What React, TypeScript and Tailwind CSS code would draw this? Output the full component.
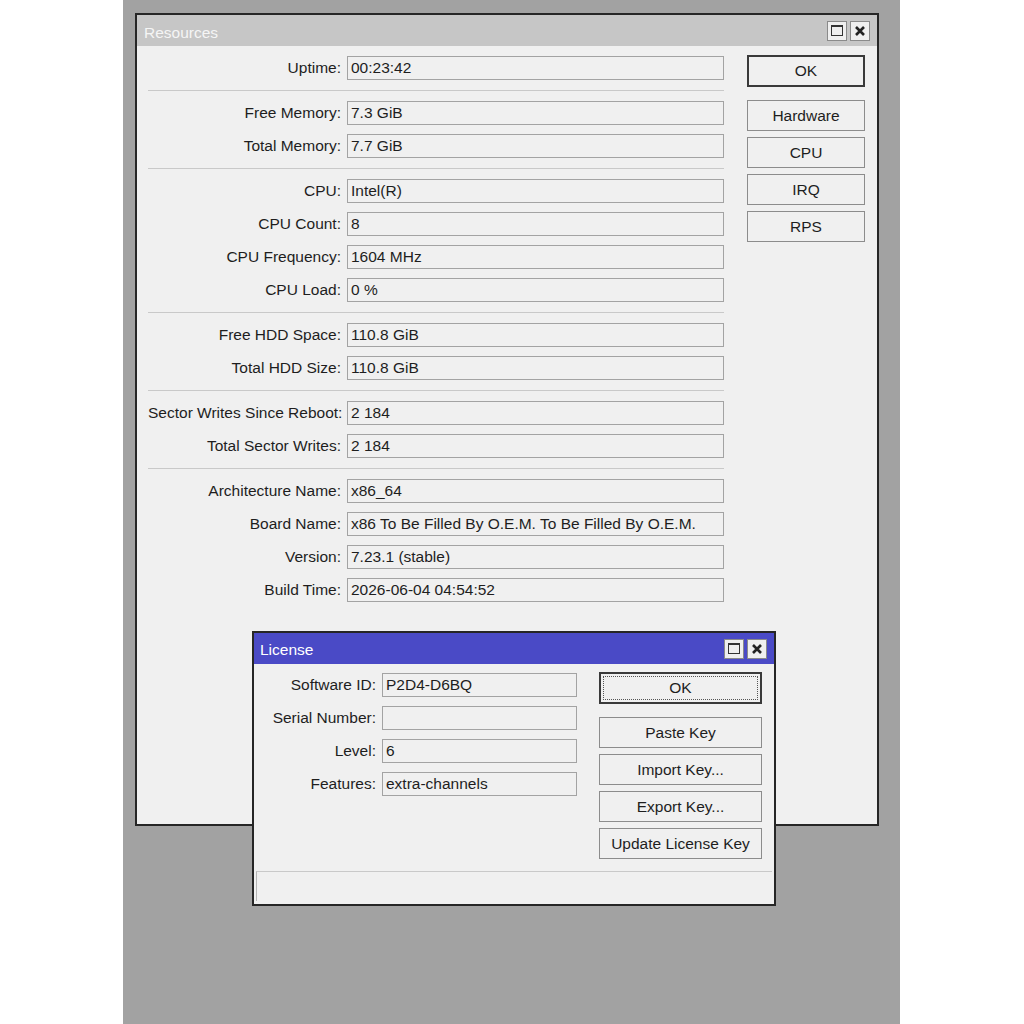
import React from 'react'

const GROUPS: [string, string][][] = [
  [['Uptime', '00:23:42']],
  [['Free Memory', '7.3 GiB'], ['Total Memory', '7.7 GiB']],
  [['CPU', 'Intel(R)'], ['CPU Count', '8'], ['CPU Frequency', '1604 MHz'], ['CPU Load', '0 %']],
  [['Free HDD Space', '110.8 GiB'], ['Total HDD Size', '110.8 GiB']],
  [['Sector Writes Since Reboot', '2 184'], ['Total Sector Writes', '2 184']],
  [
    ['Architecture Name', 'x86_64'],
    ['Board Name', 'x86 To Be Filled By O.E.M. To Be Filled By O.E.M.'],
    ['Version', '7.23.1 (stable)'],
    ['Build Time', '2026-06-04 04:54:52'],
  ],
]

const LICENSE: [string, string][] = [
  ['Software ID', 'P2D4-D6BQ'],
  ['Serial Number', ''],
  ['Level', '6'],
  ['Features', 'extra-channels'],
]

function TitleButtons() {
  return (
    <div className="flex gap-[3px]">
      <div className="w-[20px] h-[20px] border border-[#8a8a8a] bg-[#efefef] flex items-center justify-center">
        <div className="w-[12px] h-[11px] border-[1.5px] border-[#333] border-t-[2.5px]" />
      </div>
      <div className="w-[20px] h-[20px] border border-[#8a8a8a] bg-[#efefef] flex items-center justify-center">
        <svg width="12" height="12" viewBox="0 0 12 12">
          <path d="M2 2 L10 10 M10 2 L2 10" stroke="#222" strokeWidth="2.6" />
        </svg>
      </div>
    </div>
  )
}

function Field({ value, w }: { value: string, w: string }) {
  return (
    <div className={`${w} h-[24px] border border-[#a3a3a3] bg-[#f0f0f0] px-[3px] flex items-center text-[#1e1e1e] whitespace-nowrap overflow-hidden`}>
      {value}
    </div>
  )
}

function Btn({ label, main, focus }: { label: string, main?: boolean, focus?: boolean }) {
  return (
    <div className={`flex items-center justify-center bg-[#f0f0f0] text-[#1e1e1e]
      ${main ? 'h-[32px] border-2 border-[#3a3a3a]' : 'h-[31px] border border-[#8c8c8c]'}`}>
      {focus
        ? <div className="w-[calc(100%-4px)] h-[calc(100%-4px)] border border-dotted border-[#555] flex items-center justify-center">{label}</div>
        : label}
    </div>
  )
}

export default function App() {
  return (
    <div className="w-[1024px] h-[1024px] bg-white flex text-[15.5px]" style={{ fontFamily: '"Liberation Sans", Arial, sans-serif' }}>
      <div className="ml-[123px] w-[777px] h-full bg-[#a2a2a2] relative">
        {/* Resources window */}
        <div className="absolute left-[12px] top-[13px] w-[744px] h-[813px] border-2 border-[#262626] bg-[#f0f0f0] flex flex-col">
          <div className="h-[31px] bg-[#c6c6c6] flex items-center justify-between pl-[7px] pr-[7px]">
            <span className="text-[#f5f5f5] pt-[4px]">Resources</span>
            <TitleButtons />
          </div>
          <div className="flex pl-[11px] pt-[10px]">
            <div className="w-[576px] flex flex-col">
              {GROUPS.map((g, gi) => (
                <React.Fragment key={gi}>
                  {gi > 0 && <div className="h-px bg-[#c9c9c9] my-[10px]" />}
                  <div className="flex flex-col gap-[9px]">
                    {g.map(([l, v]) => (
                      <div key={l} className="flex items-center">
                        <div className="w-[199px] text-right pr-[6px] text-[#1e1e1e] whitespace-nowrap">{l}:</div>
                        <Field value={v} w="w-[377px]" />
                      </div>
                    ))}
                  </div>
                </React.Fragment>
              ))}
            </div>
            <div className="ml-[23px] w-[118px] flex flex-col -mt-[1px]">
              <Btn label="OK" main />
              <div className="mt-[13px] flex flex-col gap-[6px]">
                <Btn label="Hardware" />
                <Btn label="CPU" />
                <Btn label="IRQ" />
                <Btn label="RPS" />
              </div>
            </div>
          </div>
        </div>

        {/* License window */}
        <div className="absolute left-[129px] top-[631px] w-[524px] h-[275px] border-2 border-[#262626] bg-[#f0f0f0] flex flex-col">
          <div className="h-[31px] bg-[#4a4ac6] flex items-center justify-between pl-[6px] pr-[7px]">
            <span className="text-white pt-[3px]">License</span>
            <TitleButtons />
          </div>
          <div className="flex pt-[9px]">
            <div className="flex flex-col gap-[9px]">
              {LICENSE.map(([l, v]) => (
                <div key={l} className="flex items-center">
                  <div className="w-[128px] text-right pr-[6px] text-[#1e1e1e] whitespace-nowrap">{l}:</div>
                  <Field value={v} w="w-[195px]" />
                </div>
              ))}
            </div>
            <div className="ml-[22px] w-[163px] flex flex-col -mt-[1px]">
              <Btn label="OK" main focus />
              <div className="mt-[13px] flex flex-col gap-[6px]">
                <Btn label="Paste Key" />
                <Btn label="Import Key..." />
                <Btn label="Export Key..." />
                <Btn label="Update License Key" />
              </div>
            </div>
          </div>
          <div className="mt-auto mx-[2px] mb-[3px] h-[30px] border-t border-l border-[#b5b5b5] border-t-[#c9c9c9]" />
        </div>
      </div>
    </div>
  )
}
